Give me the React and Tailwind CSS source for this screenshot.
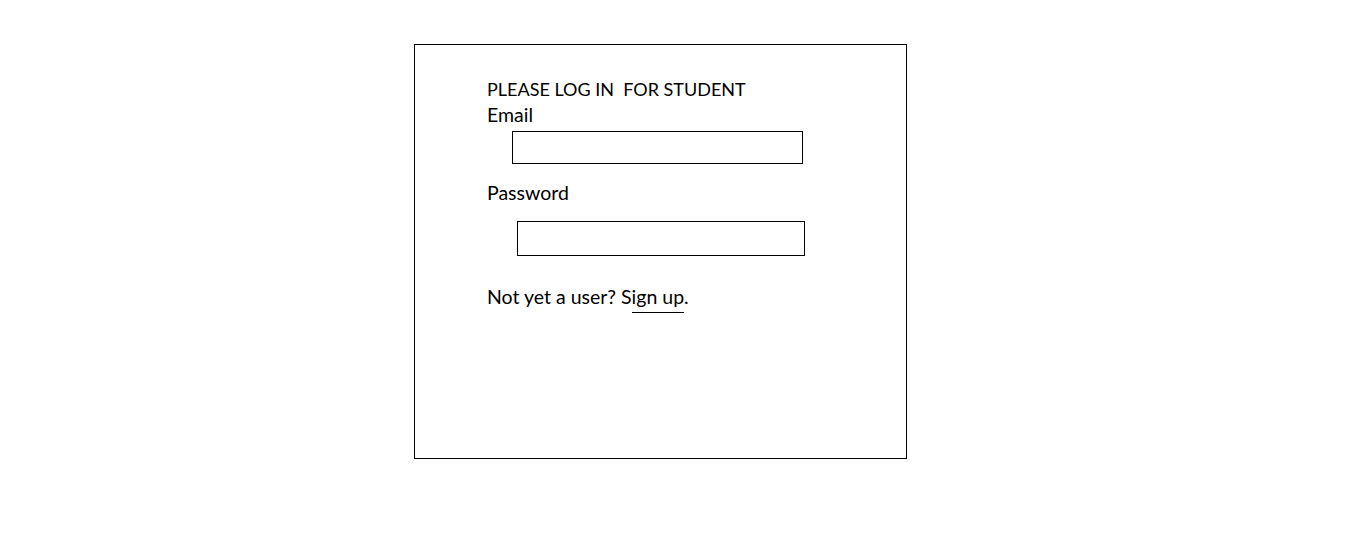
export default function App() {
  return (
    <div className="min-h-[552px] w-full bg-white pt-[44px] font-['Lato',sans-serif] text-[19.5px] leading-[26px] text-black">
      <div className="ml-[414px] h-[415px] w-[493px] border border-black pl-[72px] pt-[31px]">
        <h1 className="whitespace-pre text-[18px] font-normal">PLEASE LOG IN  FOR STUDENT</h1>
        <label className="block">Email</label>
        <input className="ml-[25px] mt-[3px] block h-[33px] w-[291px] border border-black outline-none" />
        <label className="mt-[16px] block">Password</label>
        <input type="password" className="ml-[30px] mt-[15px] block h-[35px] w-[288px] border border-black outline-none" />
        <p className="mt-[28px]">
          Not yet a user?{" "}
          <a href="#" className="relative">
            Sign up
            <span className="absolute bottom-[-5px] left-[11px] right-0 h-px bg-black" />
          </a>
          .
        </p>
      </div>
    </div>
  );
}
